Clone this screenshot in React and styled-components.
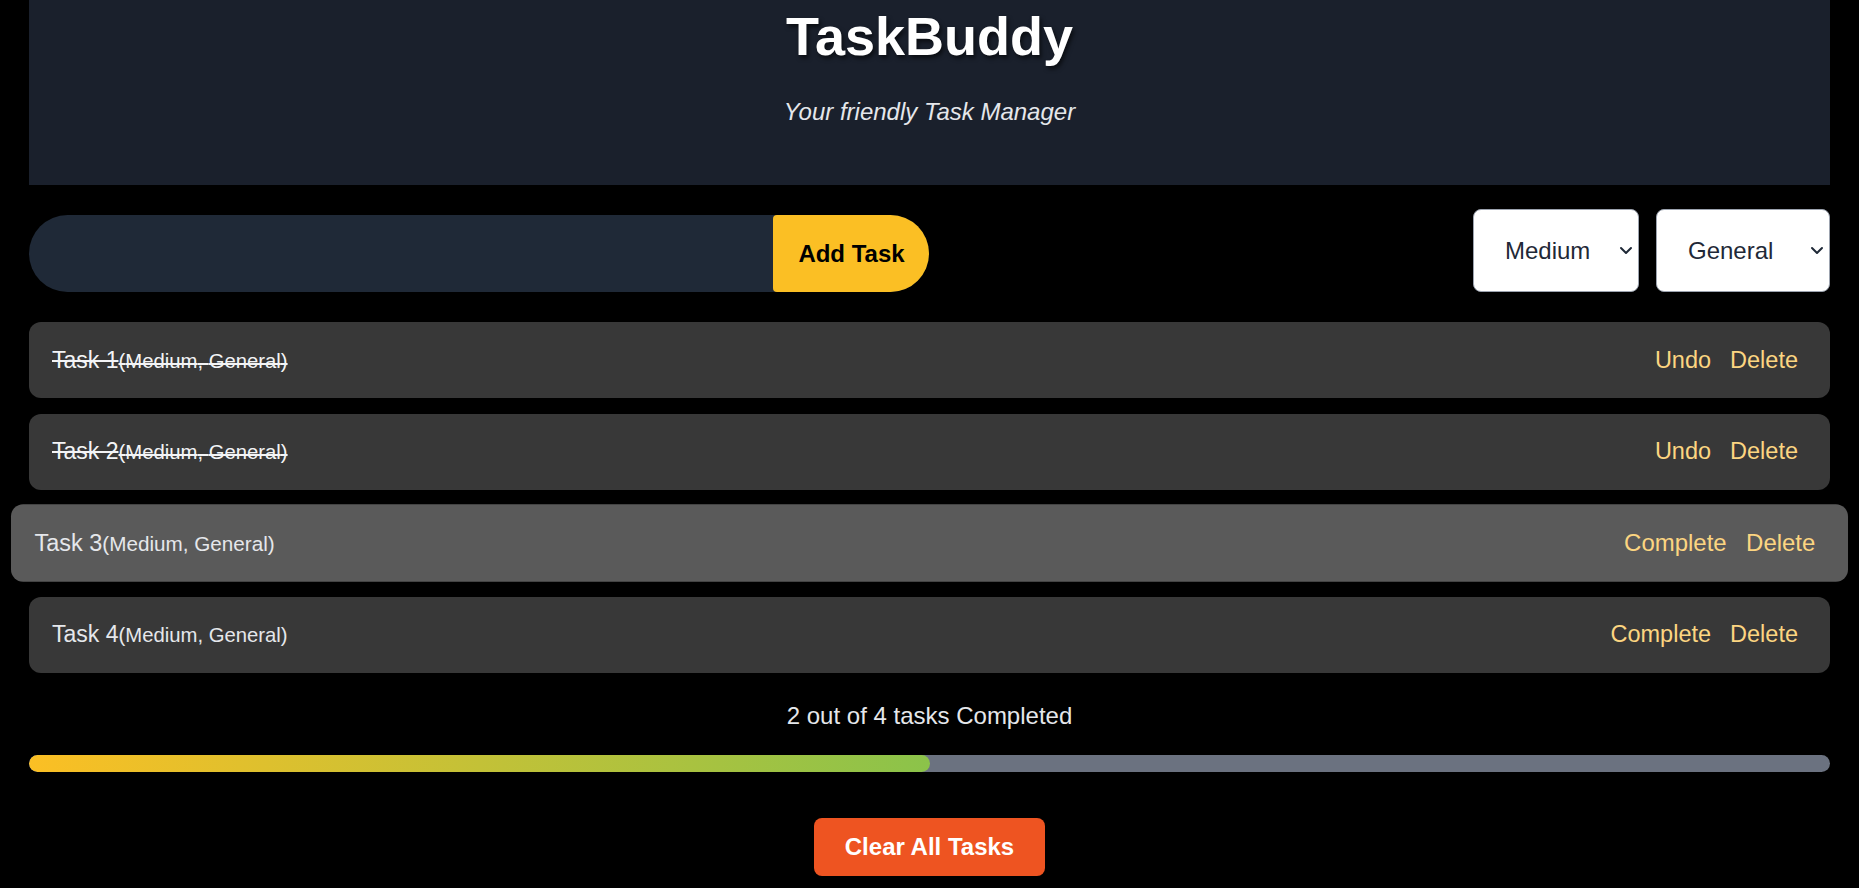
import React, { useState } from "react";
import styled, { createGlobalStyle } from "styled-components";

const GlobalStyle = createGlobalStyle`
  html, body {
    margin: 0;
    padding: 0;
    background: #000;
    font-family: "Liberation Sans", Arial, sans-serif;
  }
  * {
    box-sizing: border-box;
  }
`;

const Page = styled.div`
  min-height: 888px;
  background: #000;
  padding: 0 29px;
  display: flex;
  flex-direction: column;
`;

const Header = styled.header`
  background: #1a202c;
  padding: 9px 0 61px;
  display: flex;
  flex-direction: column;
  align-items: center;
`;

const Title = styled.h1`
  margin: 0;
  font-size: 54px;
  line-height: 1;
  font-weight: 700;
  color: #fff;
  text-shadow: 2px 3px 4px rgba(0, 0, 0, 0.6);
`;

const Subtitle = styled.p`
  margin: 37px 0 0;
  font-size: 24px;
  line-height: 1;
  font-style: italic;
  color: #e5e7eb;
`;

const Toolbar = styled.div`
  display: flex;
  justify-content: space-between;
  align-items: flex-end;
  margin-top: 24px;
`;

const AddForm = styled.form`
  display: flex;
  width: 900px;
  height: 77px;
  background: #1f2937;
  border-radius: 9999px;
  overflow: hidden;
`;

const TaskInput = styled.input`
  flex: 1;
  border: none;
  outline: none;
  background: transparent;
  color: #fff;
  font-family: inherit;
  font-size: 22px;
  padding: 0 36px;
`;

const AddButton = styled.button`
  width: 156px;
  border: none;
  border-radius: 4px;
  background: #fbbf24;
  color: #000;
  font-family: inherit;
  font-size: 24px;
  font-weight: 700;
  padding: 0 0 0 1px;
  cursor: pointer;
`;

const Selects = styled.div`
  display: flex;
  gap: 17px;
`;

const SelectWrap = styled.div`
  position: relative;
  display: flex;
`;

const Select = styled.select`
  appearance: none;
  width: ${(p) => p.$width}px;
  height: 83px;
  padding: 0 24px 0 31px;
  border: 1px solid #9ca3af;
  border-radius: 8px;
  background: #fff;
  color: #1f2937;
  font-family: inherit;
  font-size: 24px;
  outline: none;
`;

const Chevron = styled.svg`
  position: absolute;
  right: 6px;
  top: 50%;
  width: 14px;
  height: 9px;
  margin-top: -5px;
  pointer-events: none;
`;

const TaskList = styled.ul`
  list-style: none;
  margin: 30px 0 0;
  padding: 0;
  display: flex;
  flex-direction: column;
  gap: 15.5px;
`;

const TaskRow = styled.li`
  height: 76px;
  display: flex;
  align-items: center;
  justify-content: space-between;
  padding: 0 24px 0 23px;
  border-radius: 12px;
  background: ${(p) => (p.$raised ? "#5a5a5a" : "#383838")};
  transform: ${(p) => (p.$raised ? "scale(1.02)" : "none")};
  transition: transform 0.2s, background 0.2s;
`;

const TaskText = styled.span`
  color: ${(p) => (p.$done ? "#f3f4f6" : "#e5e7eb")};
  text-decoration: ${(p) => (p.$done ? "line-through" : "none")};
  font-size: 23px;
`;

const TaskMeta = styled.span`
  font-size: 20.3px;
`;

const Actions = styled.div`
  display: flex;
  gap: 3px;
`;

const ActionButton = styled.button`
  background: none;
  border: none;
  padding: 0 8px;
  color: #fcd581;
  font-family: inherit;
  font-size: 23.5px;
  cursor: pointer;
`;

const ProgressText = styled.p`
  margin: 31px 0 0;
  text-align: center;
  font-size: 24px;
  line-height: 1;
  color: #e5e7eb;
`;

const ProgressTrack = styled.div`
  margin-top: 27px;
  height: 17px;
  border-radius: 9999px;
  background: #6b7280;
  overflow: hidden;
`;

const ProgressFill = styled.div`
  height: 100%;
  border-radius: 9999px;
  background: linear-gradient(to right, #fbbf24, #8bc34a);
`;

const Footer = styled.div`
  display: flex;
  justify-content: center;
  margin-top: 46px;
`;

const ClearButton = styled.button`
  height: 58px;
  padding: 0 31px;
  border: none;
  border-radius: 8px;
  background: #ee5421;
  color: #fff;
  font-family: inherit;
  font-size: 24px;
  font-weight: 700;
  cursor: pointer;
`;

const initialTasks = [
  { id: 1, text: "Task 1", priority: "Medium", category: "General", done: true },
  { id: 2, text: "Task 2", priority: "Medium", category: "General", done: true },
  { id: 3, text: "Task 3", priority: "Medium", category: "General", done: false },
  { id: 4, text: "Task 4", priority: "Medium", category: "General", done: false },
];

const ChevronIcon = () => (
  <Chevron viewBox="0 0 14 9" fill="none">
    <path
      d="M2 2l5 5 5-5"
      stroke="#1f2937"
      strokeWidth="2"
      strokeLinecap="round"
      strokeLinejoin="round"
    />
  </Chevron>
);

export default function App() {
  const [tasks, setTasks] = useState(initialTasks);
  const [input, setInput] = useState("");
  const [priority, setPriority] = useState("Medium");
  const [category, setCategory] = useState("General");
  const [hovered, setHovered] = useState(3);

  const completed = tasks.filter((t) => t.done).length;
  const percent = tasks.length ? (completed / tasks.length) * 100 : 0;

  const addTask = (e) => {
    e.preventDefault();
    if (!input.trim()) return;
    setTasks([
      ...tasks,
      { id: Date.now(), text: input.trim(), priority, category, done: false },
    ]);
    setInput("");
  };

  const toggle = (id) =>
    setTasks(tasks.map((t) => (t.id === id ? { ...t, done: !t.done } : t)));
  const remove = (id) => setTasks(tasks.filter((t) => t.id !== id));

  return (
    <Page>
      <GlobalStyle />
      <Header>
        <Title>TaskBuddy</Title>
        <Subtitle>Your friendly Task Manager</Subtitle>
      </Header>

      <Toolbar>
        <AddForm onSubmit={addTask}>
          <TaskInput value={input} onChange={(e) => setInput(e.target.value)} />
          <AddButton type="submit">Add Task</AddButton>
        </AddForm>
        <Selects>
          <SelectWrap>
            <Select $width={166} value={priority} onChange={(e) => setPriority(e.target.value)}>
              <option>Low</option>
              <option>Medium</option>
              <option>High</option>
            </Select>
            <ChevronIcon />
          </SelectWrap>
          <SelectWrap>
            <Select $width={174} value={category} onChange={(e) => setCategory(e.target.value)}>
              <option>General</option>
              <option>Work</option>
              <option>Personal</option>
            </Select>
            <ChevronIcon />
          </SelectWrap>
        </Selects>
      </Toolbar>

      <TaskList>
        {tasks.map((t) => (
          <TaskRow
            key={t.id}
            $raised={hovered === t.id}
            onMouseEnter={() => setHovered(t.id)}
          >
            <TaskText $done={t.done}>
              {t.text}
              <TaskMeta>
                ({t.priority}, {t.category})
              </TaskMeta>
            </TaskText>
            <Actions>
              <ActionButton onClick={() => toggle(t.id)}>
                {t.done ? "Undo" : "Complete"}
              </ActionButton>
              <ActionButton onClick={() => remove(t.id)}>Delete</ActionButton>
            </Actions>
          </TaskRow>
        ))}
      </TaskList>

      <ProgressText>
        {completed} out of {tasks.length} tasks Completed
      </ProgressText>
      <ProgressTrack>
        <ProgressFill style={{ width: `${percent}%` }} />
      </ProgressTrack>

      <Footer>
        <ClearButton onClick={() => setTasks([])}>Clear All Tasks</ClearButton>
      </Footer>
    </Page>
  );
}
